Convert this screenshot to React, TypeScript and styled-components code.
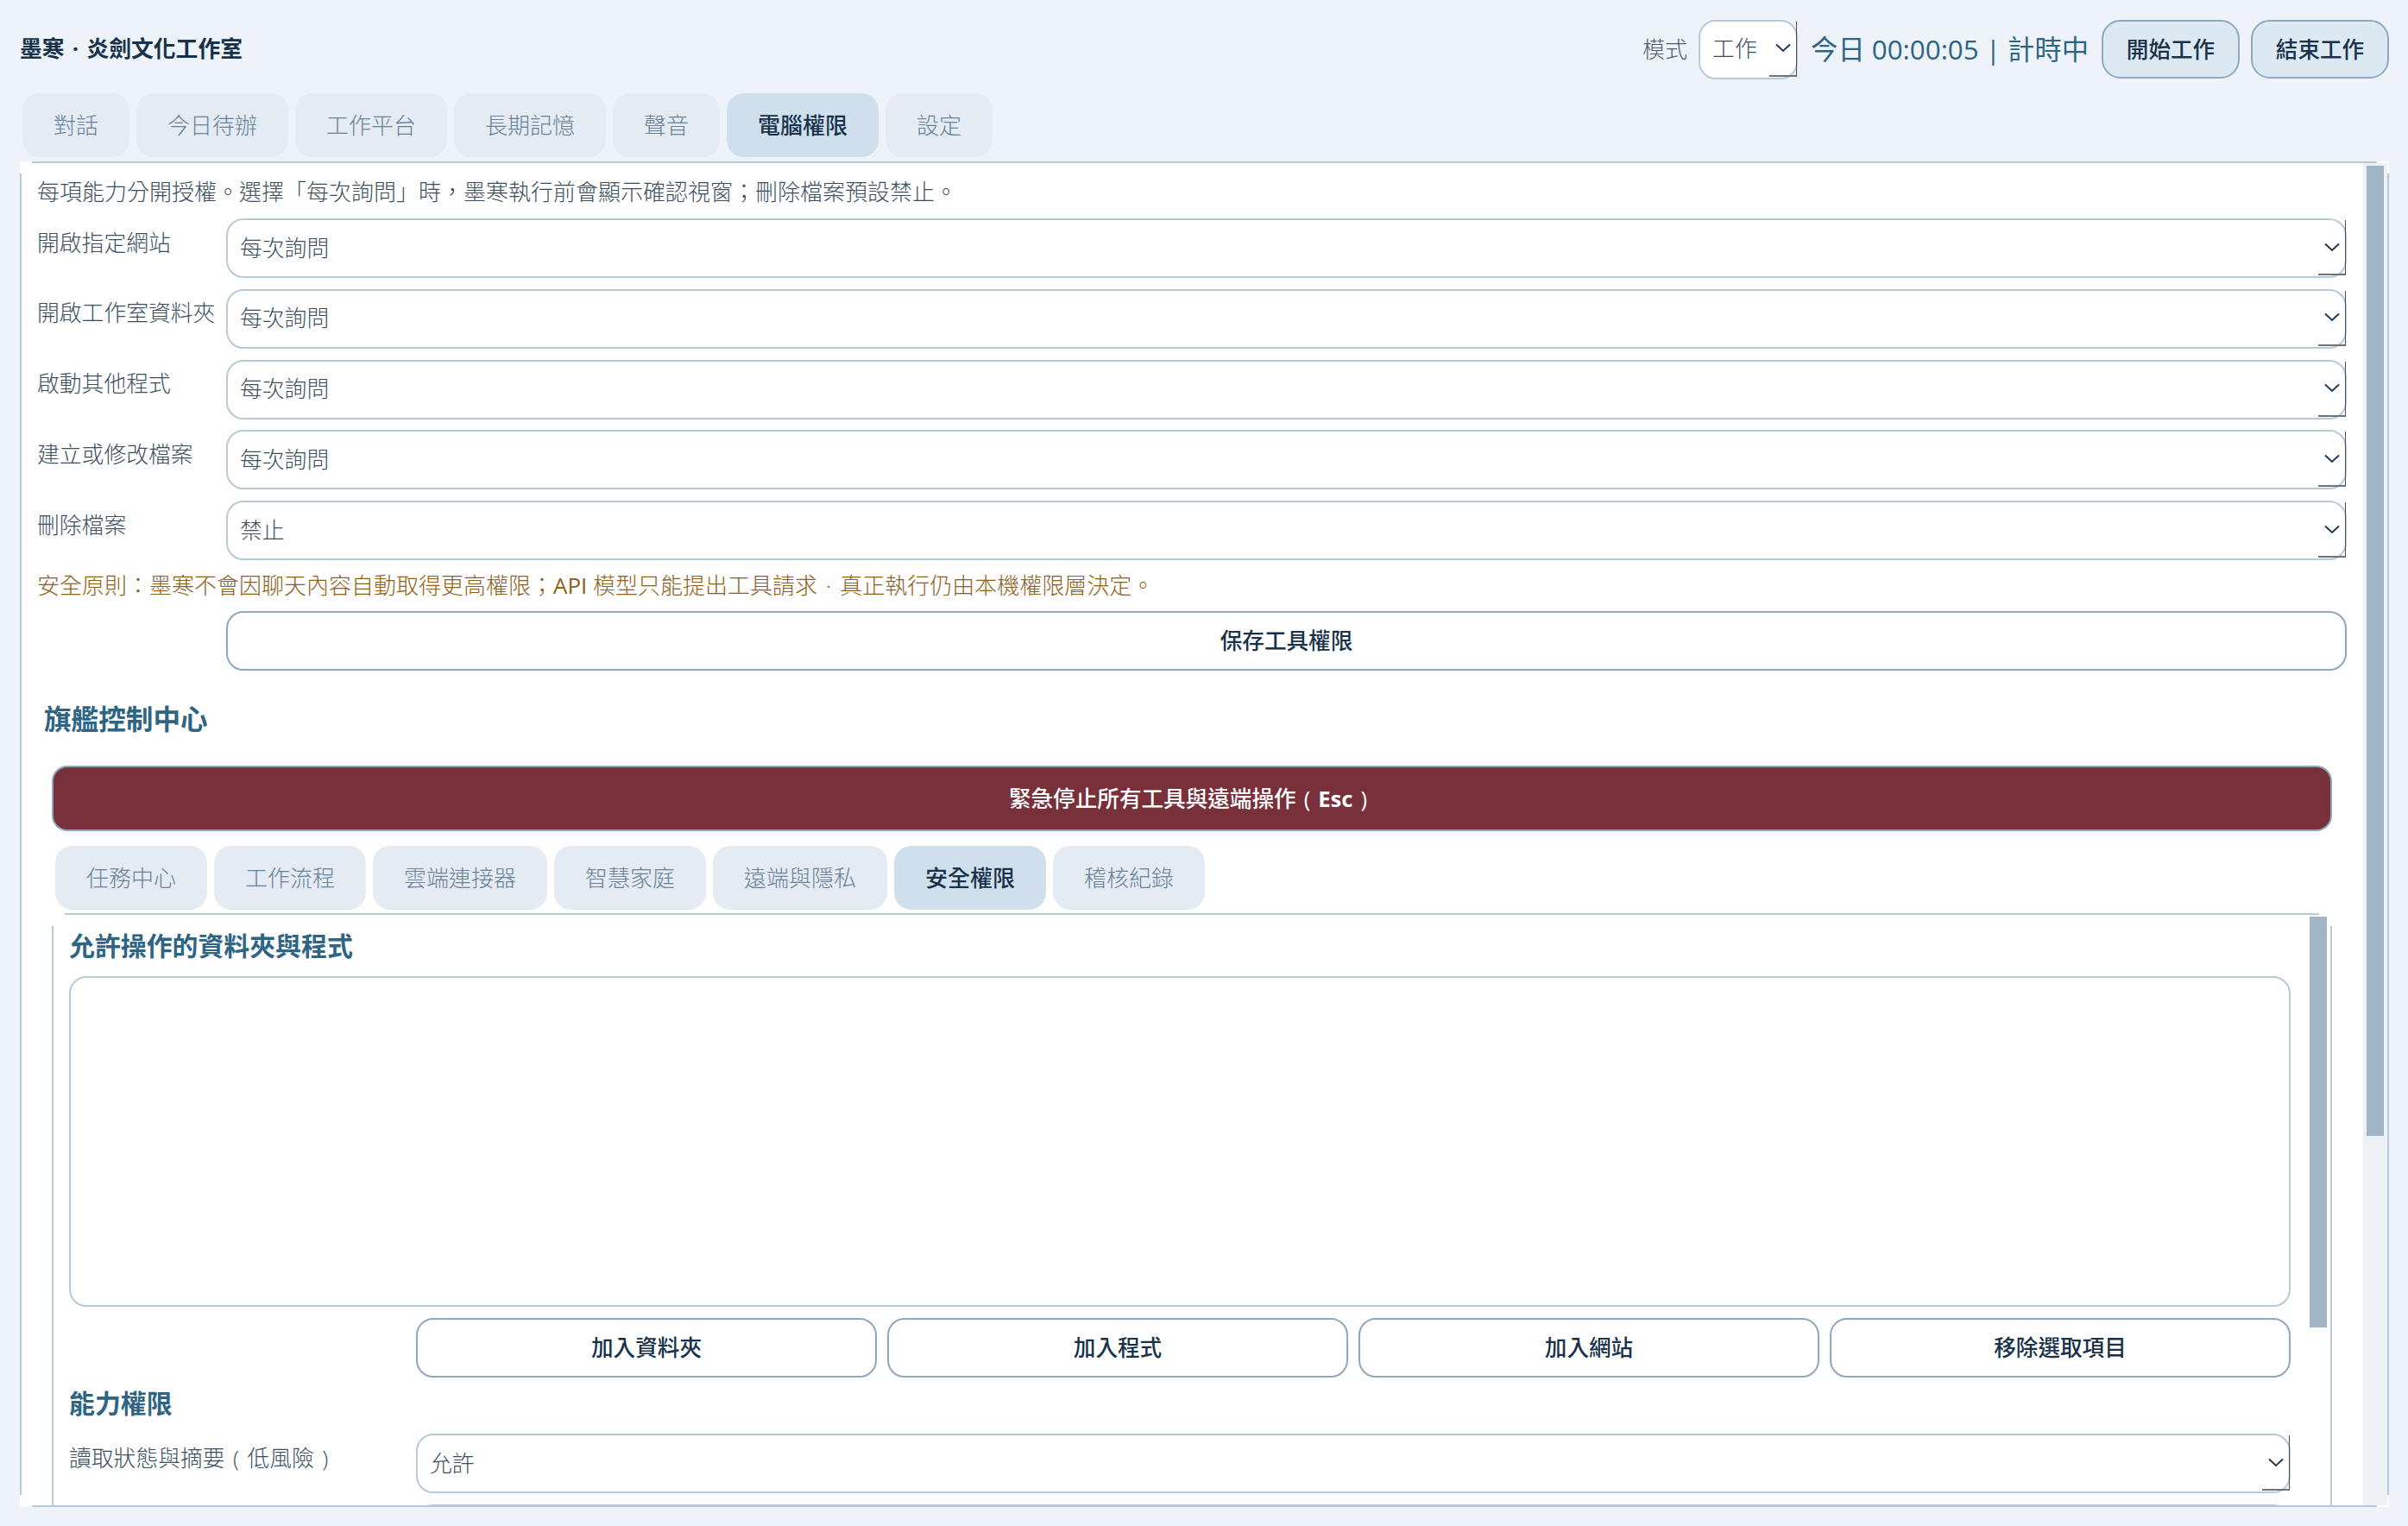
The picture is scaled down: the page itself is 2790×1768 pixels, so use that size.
import React from "react";
import styled, { createGlobalStyle } from "styled-components";

const FONT = `"Open Sans", "Noto Sans CJK TC", sans-serif`;
const INK = "#17324a";

const Global = createGlobalStyle`
  html, body { margin: 0; padding: 0; height: 100%; background: #edf3f9; overflow: hidden; }
  * { box-sizing: border-box; }
  body { font-family: ${FONT}; font-size: 26px; font-weight: 300; color: #33475a; }
`;

const segments = (color: string, inset: number) => `
  background-color: #fff;
  background-image:
    linear-gradient(${color}, ${color}),
    linear-gradient(${color}, ${color}),
    linear-gradient(${color}, ${color}),
    linear-gradient(${color}, ${color});
  background-repeat: no-repeat;
  background-size:
    calc(100% - ${inset * 2}px) 2px,
    calc(100% - ${inset * 2}px) 2px,
    2px calc(100% - ${inset * 2}px),
    2px calc(100% - ${inset * 2}px);
  background-position:
    ${inset}px 0,
    ${inset}px 100%,
    0 ${inset}px,
    100% ${inset}px;
`;

const Page = styled.div`
  width: 2790px;
  height: 1768px;
  padding: 23px 22px 22px 23px;
  display: flex;
  flex-direction: column;
  overflow: hidden;
`;

const Header = styled.header`
  display: flex;
  align-items: center;
  height: 68px;
  flex: none;
`;

const Title = styled.div`
  font-size: 25.8px;
  font-weight: 700;
  color: ${INK};
  margin-right: auto;
  padding-bottom: 4px;
`;

const ModeLabel = styled.span`
  color: #4a5d6d;
  margin-right: 13px;
  padding-bottom: 2px;
`;

const Timer = styled.div`
  font-size: 31.3px;
  font-weight: 400;
  color: #2e6584;
  margin: 0 15px;
  padding-bottom: 4px;
  white-space: nowrap;
`;

const Tool = styled.button<{ $gap?: number }>`
  width: 160px;
  height: 68px;
  border: 2px solid #8fa8bd;
  border-radius: 22px;
  background: #dce8f2;
  color: ${INK};
  font: 500 25.6px ${FONT};
  margin-left: ${(p) => p.$gap ?? 0}px;
  padding: 0 0 2px;
`;

const Tabs = styled.nav<{ $left: number; $top: number }>`
  display: flex;
  gap: 8px;
  flex: none;
  margin: ${(p) => p.$top}px 0 0 ${(p) => p.$left}px;
`;

const Tab = styled.div<{ $active?: boolean }>`
  height: 74px;
  padding: 0 36px 3px;
  border-radius: 20px;
  display: flex;
  align-items: center;
  background: ${(p) => (p.$active ? "#cfe0ec" : "#e5ebf2")};
  color: ${(p) => (p.$active ? INK : "#67829a")};
  font-weight: ${(p) => (p.$active ? 500 : 300)};
`;

const Panel = styled.section`
  flex: 1;
  min-height: 0;
  margin-top: 5px;
  display: flex;
  padding: 2px;
  ${segments("#b8c9d8", 14)}
  overflow: hidden;
`;

const Content = styled.div`
  flex: 1;
  min-width: 0;
  padding: 15px 19px 0 18px;
  overflow: hidden;
`;

const Track = styled.div<{ $bg: string; $w: number; $pad: string }>`
  flex: none;
  width: ${(p) => p.$w}px;
  background: ${(p) => p.$bg};
  padding: ${(p) => p.$pad};
`;

const Thumb = styled.div<{ $h: number }>`
  height: ${(p) => p.$h}px;
  background: #a0b4c6;
`;

const Line = styled.p<{ $warn?: boolean; $top?: number }>`
  margin: ${(p) => p.$top ?? 0}px 0 0;
  height: 36px;
  line-height: 36px;
  font-size: 26px;
  color: ${(p) => (p.$warn ? "#8e6018" : "#3c4f60")};
  white-space: nowrap;
`;

const Latin = styled.span<{ $w: number }>`
  font-weight: ${(p) => p.$w};
`;

const Wide = styled.span`
  display: inline-block;
  width: 1em;
  text-align: center;
`;

const Rows = styled.div<{ $label: number; $top: number }>`
  display: grid;
  grid-template-columns: ${(p) => p.$label}px 1fr;
  row-gap: 12.75px;
  margin-top: ${(p) => p.$top}px;
  align-items: start;
`;

const RowLabel = styled.label`
  color: #3c4f60;
  font-size: 25.8px;
  line-height: 36px;
  padding-top: 9.5px;
  white-space: nowrap;
`;

const SelectWrap = styled.div`
  position: relative;
  height: 69px;
`;

const NativeSelect = styled.select`
  appearance: none;
  width: 100%;
  height: 100%;
  padding: 0 40px 2px 14px;
  background: #fff;
  border: 2px solid #b8c9d8;
  border-radius: 20px;
  color: #3c4f60;
  font: 300 25.8px ${FONT};
`;

const DropBox = styled.span`
  position: absolute;
  right: 1px;
  top: 2px;
  bottom: 3px;
  width: 32px;
  border-right: 1px solid #4a4f55;
  border-bottom: 2px solid #6d747c;
  display: flex;
  align-items: center;
  justify-content: center;
  pointer-events: none;
`;

const Chevron = () => (
  <svg width="18" height="11" viewBox="0 0 18 11" fill="none">
    <path d="M1 1.5 L9 9 L17 1.5" stroke="#1e3a52" strokeWidth="2" />
  </svg>
);

const Drop = ({ value, options }: { value: string; options: string[] }) => (
  <SelectWrap>
    <NativeSelect defaultValue={value}>
      {options.map((o) => (
        <option key={o}>{o}</option>
      ))}
    </NativeSelect>
    <DropBox>
      <Chevron />
    </DropBox>
  </SelectWrap>
);

const ModeSelect = styled.div`
  width: 115px;
  flex: none;
`;

const OutlineButton = styled.button`
  height: 69px;
  width: 100%;
  background: #fff;
  border: 2px solid #8fa8bd;
  border-radius: 20px;
  color: ${INK};
  font: 500 25.6px ${FONT};
  padding: 0 0 4px;
`;

const SaveRow = styled.div`
  margin: 12px 0 0 219px;
`;

const Heading = styled.h2<{ $left: number; $top: number; $size: number; $lh: number }>`
  margin: ${(p) => p.$top}px 0 0 ${(p) => p.$left}px;
  font-size: ${(p) => p.$size}px;
  line-height: ${(p) => p.$lh}px;
  font-weight: 700;
  color: #2e6584;
`;

const Flagship = styled.div`
  margin: 32px 17px 0;
`;

const Danger = styled.button`
  display: block;
  width: 100%;
  height: 76px;
  background: #78303b;
  border: 2px solid #8fa8bd;
  border-radius: 18px;
  color: #fff;
  font: 500 25.6px ${FONT};
  padding: 0 0 3px;
`;

const InnerPanel = styled.div`
  margin-top: 4px;
  height: 900px;
  display: flex;
  padding: 2px;
  ${segments("#b8c9d8", 15)}
`;

const InnerContent = styled.div`
  flex: 1;
  min-width: 0;
  padding: 18px 18px 0 18px;
`;

const ListBox = styled.div`
  margin-top: 15px;
  height: 383px;
  background: #fff;
  border: 2px solid #b8c9d8;
  border-radius: 20px;
`;

const ButtonRow = styled.div`
  display: grid;
  grid-template-columns: repeat(4, 1fr);
  gap: 12px;
  margin: 13px 0 0 402px;
`;

const main = ["對話", "今日待辦", "工作平台", "長期記憶", "聲音", "電腦權限", "設定"];
const sub = ["任務中心", "工作流程", "雲端連接器", "智慧家庭", "遠端與隱私", "安全權限", "稽核紀錄"];
const perms = ["開啟指定網站", "開啟工作室資料夾", "啟動其他程式", "建立或修改檔案", "刪除檔案"];
const levels = ["每次詢問", "允許", "禁止"];

export default function App() {
  return (
    <Page>
      <Global />
      <Header>
        <Title>
          墨寒<Wide>·</Wide>炎劍文化工作室
        </Title>
        <ModeLabel>模式</ModeLabel>
        <ModeSelect>
          <Drop value="工作" options={["工作", "休息"]} />
        </ModeSelect>
        <Timer>今日 00:00:05 | 計時中</Timer>
        <Tool>開始工作</Tool>
        <Tool $gap={13}>結束工作</Tool>
      </Header>

      <Tabs $left={3} $top={17}>
        {main.map((t) => (
          <Tab key={t} $active={t === "電腦權限"}>
            {t}
          </Tab>
        ))}
      </Tabs>

      <Panel>
        <Content>
          <Line>每項能力分開授權。選擇「每次詢問」時，墨寒執行前會顯示確認視窗；刪除檔案預設禁止。</Line>
          <Rows $label={219} $top={13}>
            {perms.map((p) => (
              <React.Fragment key={p}>
                <RowLabel>{p}</RowLabel>
                <Drop value={p === "刪除檔案" ? "禁止" : "每次詢問"} options={levels} />
              </React.Fragment>
            ))}
          </Rows>
          <Line $warn $top={11}>
            安全原則：墨寒不會因聊天內容自動取得更高權限；<Latin $w={400}>API</Latin> 模型只能提出工具請求<Wide>·</Wide>
            真正執行仍由本機權限層決定。
          </Line>
          <SaveRow>
            <OutlineButton>保存工具權限</OutlineButton>
          </SaveRow>

          <Heading $left={8} $top={34} $size={31.6} $lh={44}>
            旗艦控制中心
          </Heading>

          <Flagship>
            <Danger>
              緊急停止所有工具與遠端操作<Wide>(</Wide>
              <Latin $w={700}>Esc</Latin>
              <Wide>)</Wide>
            </Danger>
            <Tabs $left={4} $top={17}>
              {sub.map((t) => (
                <Tab key={t} $active={t === "安全權限"}>
                  {t}
                </Tab>
              ))}
            </Tabs>
            <InnerPanel>
              <InnerContent>
                <Heading $left={0} $top={-2} $size={29.9} $lh={40}>
                  允許操作的資料夾與程式
                </Heading>
                <ListBox role="listbox" />
                <ButtonRow>
                  <OutlineButton>加入資料夾</OutlineButton>
                  <OutlineButton>加入程式</OutlineButton>
                  <OutlineButton>加入網站</OutlineButton>
                  <OutlineButton>移除選取項目</OutlineButton>
                </ButtonRow>
                <Heading $left={0} $top={10} $size={29.9} $lh={40}>
                  能力權限
                </Heading>
                <Rows $label={402} $top={15}>
                  <RowLabel>
                    讀取狀態與摘要<Wide>(</Wide>低風險<Wide>)</Wide>
                  </RowLabel>
                  <Drop value="允許" options={levels} />
                  <span />
                  <SelectWrap>
                    <NativeSelect aria-label="下一項能力權限" />
                  </SelectWrap>
                </Rows>
              </InnerContent>
              <Track $bg="#fff" $w={28} $pad="2px 4px 0 4px">
                <Thumb $h={476} />
              </Track>
            </InnerPanel>
          </Flagship>
        </Content>
        <Track $bg="#edf1f5" $w={28} $pad="3px 4px 0 4px">
          <Thumb $h={1124} />
        </Track>
      </Panel>
    </Page>
  );
}
